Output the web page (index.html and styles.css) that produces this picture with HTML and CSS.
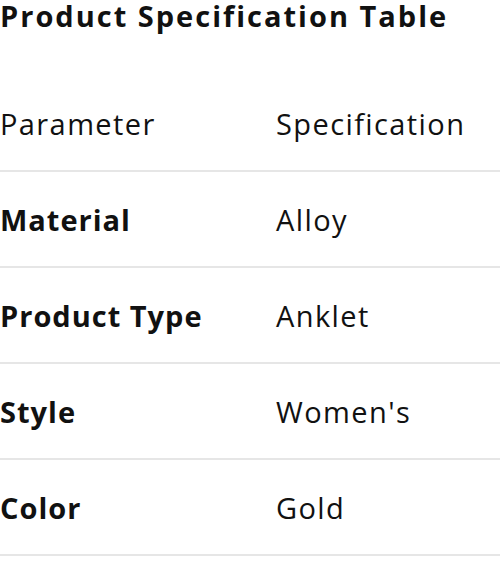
FILE: index.html
```html
<!DOCTYPE html>
<html>
<head>
<meta charset="utf-8">
<link rel="stylesheet" href="styles.css">
</head>
<body>
<h2 class="title">Product Specification Table</h2>
<table class="spec">
<thead>
<tr><th>Parameter</th><th>Specification</th></tr>
</thead>
<tbody>
<tr><td class="key">Material</td><td>Alloy</td></tr>
<tr><td class="key">Product Type</td><td>Anklet</td></tr>
<tr><td class="key">Style</td><td>Women's</td></tr>
<tr><td class="key">Color</td><td>Gold</td></tr>
</tbody>
</table>
</body>
</html>
```
FILE: styles.css
```css
html, body {
  margin: 0;
  padding: 0;
  background: #fff;
}
body {
  font-family: "Open Sans", "Noto Sans", sans-serif;
  color: #111;
  overflow: hidden;
}
.title {
  margin: 0;
  font-size: 29px;
  font-weight: 700;
  line-height: 32px;
  letter-spacing: 2px;
  white-space: nowrap;
}
.spec {
  margin-top: 44px;
  width: 100%;
  border-collapse: collapse;
  font-size: 29px;
  letter-spacing: 1.4px;
}
.spec th, .spec td {
  text-align: left;
  font-weight: 400;
  padding: 0;
  height: 94px;
  vertical-align: middle;
  border-bottom: 2px solid #e6e6e6;
  white-space: nowrap;
}
.spec th:first-child, .spec td:first-child {
  width: 276px;
}
.spec td.key {
  font-weight: 700;
  letter-spacing: 1px;
}
```
